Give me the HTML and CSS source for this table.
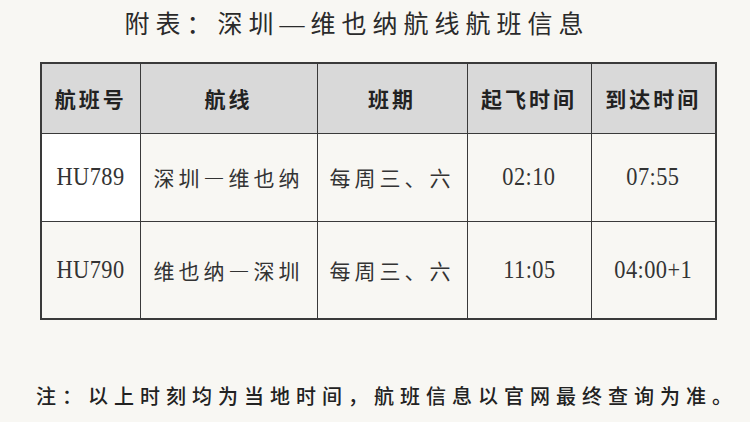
FILE: index.html
```html
<!DOCTYPE html>
<html lang="zh">
<head>
<meta charset="utf-8">
<link rel="stylesheet" href="styles.css">
</head>
<body>
<div class="page">
  <h1 class="title">附表：深圳—维也纳航线航班信息</h1>
  <table class="flights">
    <colgroup>
      <col class="c1"><col class="c2"><col class="c3"><col class="c4"><col class="c5">
    </colgroup>
    <thead>
      <tr class="head">
        <th>航班号</th><th>航线</th><th>班期</th><th>起飞时间</th><th>到达时间</th>
      </tr>
    </thead>
    <tbody>
      <tr class="r1">
        <td class="num white"><span>HU789</span></td><td class="cn">深圳—维也纳</td><td class="cn">每周三、六</td><td class="num"><span>02:10</span></td><td class="num"><span>07:55</span></td>
      </tr>
      <tr class="r2">
        <td class="num"><span>HU790</span></td><td class="cn">维也纳—深圳</td><td class="cn">每周三、六</td><td class="num"><span>11:05</span></td><td class="num"><span>04:00+1</span></td>
      </tr>
    </tbody>
  </table>
  <p class="note">注：以上时刻均为当地时间，航班信息以官网最终查询为准。</p>
</div>
</body>
</html>
```
FILE: styles.css
```css
html, body {
  margin: 0;
  padding: 0;
  background: #f8f7f3;
}
.page {
  width: 750px;
  height: 422px;
  font-family: "Liberation Serif", "Noto Sans CJK SC", serif;
  color: #222;
  display: flex;
  flex-direction: column;
}
.title {
  margin: 8px 0 0 0;
  height: 34px;
  line-height: 34px;
  font-size: 25px;
  font-weight: 400;
  letter-spacing: 6px;
  text-align: center;
  padding-right: 36px;
  color: #2a2a2a;
}
.flights {
  margin: 20px 0 0 40px;
  width: 675px;
  border-collapse: collapse;
  table-layout: fixed;
  border: 2px solid #3a3a3a;
}
.c1 { width: 99px; }
.c2 { width: 177px; }
.c3 { width: 150px; }
.c4 { width: 124px; }
.c5 { width: 125px; }
.flights th, .flights td {
  border: 1.5px solid #3a3a3a;
  text-align: center;
  padding: 0;
  white-space: nowrap;
}
.flights th {
  background: #d9d9d9;
  font-family: "Noto Sans CJK SC", sans-serif;
  font-size: 21px;
  font-weight: 700;
  letter-spacing: 3px;
  color: #222;
}
.head { height: 70px; }
.r1 { height: 88px; }
.r2 { height: 98px; }
.flights td {
  background: #f8f7f3;
  color: #333;
}
.flights td.white { background: #ffffff; }
.num {
  font-family: "Liberation Serif", serif;
  font-size: 26px;
  letter-spacing: 0.5px;
}
.num span {
  display: inline-block;
  transform: scaleX(0.86);
}
.cn {
  font-family: "Noto Sans CJK SC", sans-serif;
  font-size: 21px;
  letter-spacing: 4px;
  color: #444;
}
.note {
  margin: 61px 0 0 36px;
  font-family: "Noto Sans CJK SC", sans-serif;
  font-size: 20px;
  font-weight: 500;
  letter-spacing: 6px;
  color: #222;
  white-space: nowrap;
}
```
